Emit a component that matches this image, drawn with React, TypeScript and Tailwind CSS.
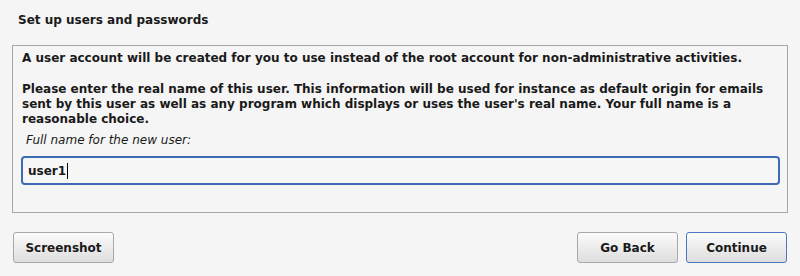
import React from "react";

const font = { fontFamily: '"DejaVu Sans", sans-serif' };

const Btn = ({ label, primary = false }: { label: string; primary?: boolean }) => (
  <button
    className={`h-[31px] w-[101px] rounded-[3px] border bg-gradient-to-b from-[#fbfbfb] to-[#dedede] text-[12px] font-bold text-[#1a1a1a] ${
      primary ? "border-[#4a78c0]" : "border-[#a8a8a8]"
    }`}
  >
    {label}
  </button>
);

export default function App() {
  return (
    <div className="h-[276px] w-[800px] bg-[#f5f5f5] text-[#1a1a1a]" style={font}>
      <div className="px-[18px] pt-[12px] text-[12px] font-bold leading-[16px]">Set up users and passwords</div>
      <div className="mx-[12px] mt-[17px] h-[168px] w-[776px] border border-[#a6a6a6] px-[9px] pt-[5px]">
        <p className="text-[12px] font-bold leading-[15px]">
          A user account will be created for you to use instead of the root account for non-administrative activities.
        </p>
        <p className="mt-[16px] text-[12px] font-bold leading-[15px]">
          Please enter the real name of this user. This information will be used for instance as default origin for emails
          sent by this user as well as any program which displays or uses the user's real name. Your full name is a
          reasonable choice.
        </p>
        <div className="mt-[6px] pl-[4px] text-[12px] italic leading-[15px]">Full name for the new user:</div>
        <div className="mt-[8px] flex h-[29px] w-[759px] -ml-[1px] items-center rounded-[4px] border-2 border-[#3d6cb5] bg-[#f7f7f7] px-[5px]">
          <span className="text-[12px] font-bold">user1</span>
          <span className="ml-[1px] h-[16px] w-px bg-black" />
        </div>
      </div>
      <div className="mt-[19px] flex px-[13px]">
        <Btn label="Screenshot" />
        <div className="flex-1" />
        <Btn label="Go Back" />
        <div className="w-[8px]" />
        <Btn label="Continue" primary />
      </div>
    </div>
  );
}
